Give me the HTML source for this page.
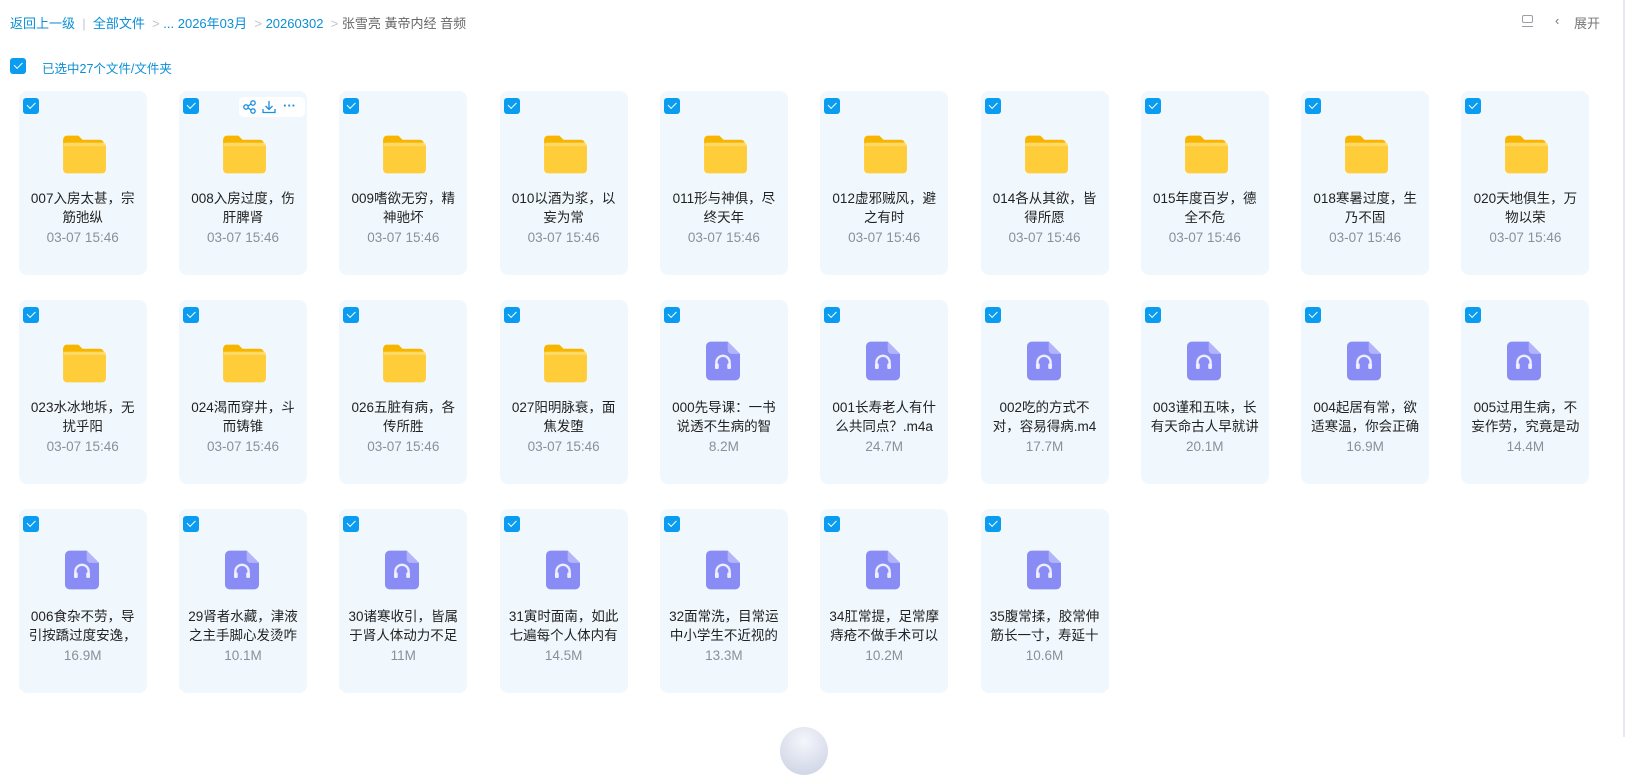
<!DOCTYPE html>
<html><head><meta charset="utf-8"><style>
*{margin:0;padding:0;box-sizing:border-box}
body{width:1626px;height:737px;background:#fff;font-family:"Liberation Sans","Noto Sans CJK SC",sans-serif;position:relative;overflow:hidden}
.bc{position:absolute;top:13px;left:10px;font-size:13px;color:#0a8fd6;white-space:nowrap}
.g{color:#c0c4cc}.d{color:#666}
.cb{position:absolute;width:16px;height:16px;border-radius:3px;background:#0a9cf0}
.cb:after{content:"";position:absolute;left:4px;top:4px;width:7px;height:3.5px;border-left:1.6px solid #fff;border-bottom:1.6px solid #fff;transform:rotate(-45deg)}
.card{position:absolute;width:128px;height:184px;background:#f0f8fe;border-radius:8px}
.card .cb{left:4px;top:7px}
.nm{position:absolute;top:98px;left:9px;right:9px;text-align:center;font-size:13.5px;line-height:19px;color:#222;height:38px;overflow:hidden;word-break:break-all}
.dt{position:absolute;top:139px;left:0;right:0;text-align:center;font-size:13.5px;color:#8a8f99}
.ic{position:absolute;left:41px;top:42px}
</style></head><body>
<div class="bc">返回上一级 <span class="g">&nbsp;|&nbsp;</span> 全部文件 <span class="g">&nbsp;&gt;</span> ... 2026年03月 <span class="g">&nbsp;&gt;</span> 20260302 <span class="g">&nbsp;&gt;</span> <span class="d">张雪亮 黃帝内经 音频</span></div>
<div style="position:absolute;top:15px;left:1522px;width:13px;height:14px">
<div style="width:11px;height:8px;border:1.3px solid #9a9ea6;border-radius:2px"></div><div style="width:11px;height:1.3px;background:#9a9ea6;margin-top:3px"></div></div>
<div style="position:absolute;top:13px;left:1555px;font-size:13px;color:#777">‹</div>
<div style="position:absolute;top:13px;left:1574px;font-size:13px;color:#777">展开</div>
<div style="position:absolute;top:0;left:1623px;width:2px;height:737px;background:#e6e8f5"></div>
<div class="cb" style="left:10px;top:58px"></div>
<div style="position:absolute;left:42px;top:58px;font-size:12.5px;color:#0a8fd6">已选中27个文件/文件夹</div>
<div id="g"></div>
<div style="position:absolute;left:780px;top:727px;width:48px;height:48px;border-radius:50%;background:radial-gradient(circle at 50% 30%,#f4f6fb,#c9cfe2)"></div>
<script>
var F='<svg class="ic" width="47" height="42" viewBox="0 0 46 40"><path d="M3 6a4 4 0 0 1 4-4h11l4 4h17a4 4 0 0 1 4 4v4H3z" fill="#f7b500"/><rect x="3" y="9" width="42" height="30" rx="4" fill="#ffcd3a"/><rect x="3" y="9" width="42" height="3" fill="#ffe38a" opacity=".6"/></svg>';
var A='<svg class="ic" style="left:46px;top:40px" width="34" height="42" viewBox="0 0 36 41"><path d="M5 0h18l13 13v23a5 5 0 0 1-5 5H5a5 5 0 0 1-5-5V5a5 5 0 0 1 5-5z" fill="#8a8cf5"/><path d="M23 0l13 13h-9a4 4 0 0 1-4-4z" fill="#b3b5fb"/><path d="M11 27v-5a7 7 0 0 1 14 0v5" stroke="#eef" stroke-width="2.5" fill="none"/><rect x="9.5" y="23" width="4" height="6" rx="1.5" fill="#eef"/><rect x="22.5" y="23" width="4" height="6" rx="1.5" fill="#eef"/></svg>';
var T='<div style="position:absolute;left:60px;top:6px;width:66px;height:20px;background:#fff;border-radius:5px"><svg width="66" height="20" viewBox="0 0 66 20" fill="none" stroke="#1a8fe0" stroke-width="1.3"><circle cx="7" cy="10" r="2.2"/><circle cx="14" cy="6" r="2.2"/><circle cx="14" cy="14" r="2.2"/><path d="M9 9l3-2M9 11l3 2"/><path d="M30 4v8M26.5 9l3.5 3.5 3.5-3.5M24 12v3.5h12V12"/></svg><div style="position:absolute;left:44px;top:1px;font-size:13px;color:#1a8fe0;font-weight:bold">···</div></div>';
var d=[
['F','007入房太甚，宗筋弛纵','03-07 15:46'],['F','008入房过度，伤肝脾肾','03-07 15:46'],['F','009嗜欲无穷，精神驰坏','03-07 15:46'],['F','010以酒为浆，以妄为常','03-07 15:46'],['F','011形与神俱，尽终天年','03-07 15:46'],['F','012虚邪贼风，避之有时','03-07 15:46'],['F','014各从其欲，皆得所愿','03-07 15:46'],['F','015年度百岁，德全不危','03-07 15:46'],['F','018寒暑过度，生乃不固','03-07 15:46'],['F','020天地俱生，万物以荣','03-07 15:46'],
['F','023水冰地坼，无扰乎阳','03-07 15:46'],['F','024渴而穿井，斗而铸锥','03-07 15:46'],['F','026五脏有病，各传所胜','03-07 15:46'],['F','027阳明脉衰，面焦发堕','03-07 15:46'],['A','000先导课：一书说透不生病的智','8.2M'],['A','001长寿老人有什么共同点？.m4a','24.7M'],['A','002吃的方式不对，容易得病.m4a','17.7M'],['A','003谨和五味，长有天命古人早就讲','20.1M'],['A','004起居有常，欲适寒温，你会正确','16.9M'],['A','005过用生病，不妄作劳，究竟是动','14.4M'],
['A','006食杂不劳，导引按蹻过度安逸，','16.9M'],['A','29肾者水藏，津液之主手脚心发烫咋','10.1M'],['A','30诸寒收引，皆属于肾人体动力不足','11M'],['A','31寅时面南，如此七遍每个人体内有','14.5M'],['A','32面常洗，目常运中小学生不近视的','13.3M'],['A','34肛常提，足常摩痔疮不做手术可以','10.2M'],['A','35腹常揉，胶常伸筋长一寸，寿延十','10.6M']];
var h='';
d.forEach(function(e,i){var c=i%10,r=Math.floor(i/10);var x=18.7+c*160.3,y=91+r*209;
h+='<div class="card" style="left:'+x+'px;top:'+y+'px"><div class="cb"></div>'+(e[0]=='F'?F:A)+'<div class="nm">'+e[1]+'</div><div class="dt">'+e[2]+'</div>'+(i==1?T:'')+'</div>';});
document.getElementById('g').innerHTML=h;
</script>
</body></html>
